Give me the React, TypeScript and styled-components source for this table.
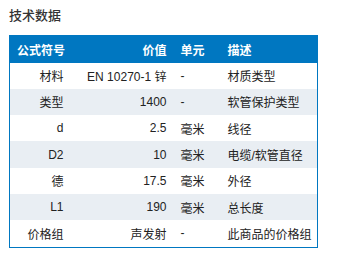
import React from "react";
import styled, { createGlobalStyle } from "styled-components";

const GlobalStyle = createGlobalStyle`
  body {
    margin: 0;
    background: #ffffff;
    font-family: "Liberation Sans", "Noto Sans CJK SC", sans-serif;
  }
`;

const Wrapper = styled.div`
  padding: 8px 9px;
`;

const Title = styled.h3`
  margin: 0 0 11px 0;
  font-size: 13px;
  line-height: 16px;
  font-weight: 500;
  color: #333333;
`;

const Table = styled.table`
  width: 308px;
  border-collapse: collapse;
  border: 1px solid #0077c1;
  font-size: 12px;
  color: #222222;
  table-layout: fixed;
`;

const HeadCell = styled.th<{ $align?: string; $w: number }>`
  width: ${(p) => p.$w}px;
  height: 27px;
  padding: 0 7px;
  background: #0077c1;
  color: #ffffff;
  font-weight: bold;
  text-align: ${(p) => p.$align || "left"};
  white-space: nowrap;
  box-sizing: border-box;
`;

const Row = styled.tr<{ $striped: boolean }>`
  background: ${(p) => (p.$striped ? "#e9eef3" : "#ffffff")};
`;

const Cell = styled.td<{ $align?: string }>`
  height: 26.3px;
  padding: 0 7px;
  text-align: ${(p) => p.$align || "left"};
  white-space: nowrap;
`;

const rows = [
  ["材料", "EN 10270-1 锌", "-", "材质类型"],
  ["类型", "1400", "-", "软管保护类型"],
  ["d", "2.5", "毫米", "线径"],
  ["D2", "10", "毫米", "电缆/软管直径"],
  ["德", "17.5", "毫米", "外径"],
  ["L1", "190", "毫米", "总长度"],
  ["价格组", "声发射", "-", "此商品的价格组"],
];

export default function App() {
  return (
    <>
      <GlobalStyle />
      <Wrapper>
        <Title>技术数据</Title>
        <Table>
          <thead>
            <tr>
              <HeadCell $w={61} $align="right">公式符号</HeadCell>
              <HeadCell $w={103} $align="right">价值</HeadCell>
              <HeadCell $w={47}>单元</HeadCell>
              <HeadCell $w={97}>描述</HeadCell>
            </tr>
          </thead>
          <tbody>
            {rows.map((r, i) => (
              <Row key={i} $striped={i % 2 === 1}>
                <Cell $align="right">{r[0]}</Cell>
                <Cell $align="right">{r[1]}</Cell>
                <Cell>{r[2]}</Cell>
                <Cell>{r[3]}</Cell>
              </Row>
            ))}
          </tbody>
        </Table>
      </Wrapper>
    </>
  );
}
